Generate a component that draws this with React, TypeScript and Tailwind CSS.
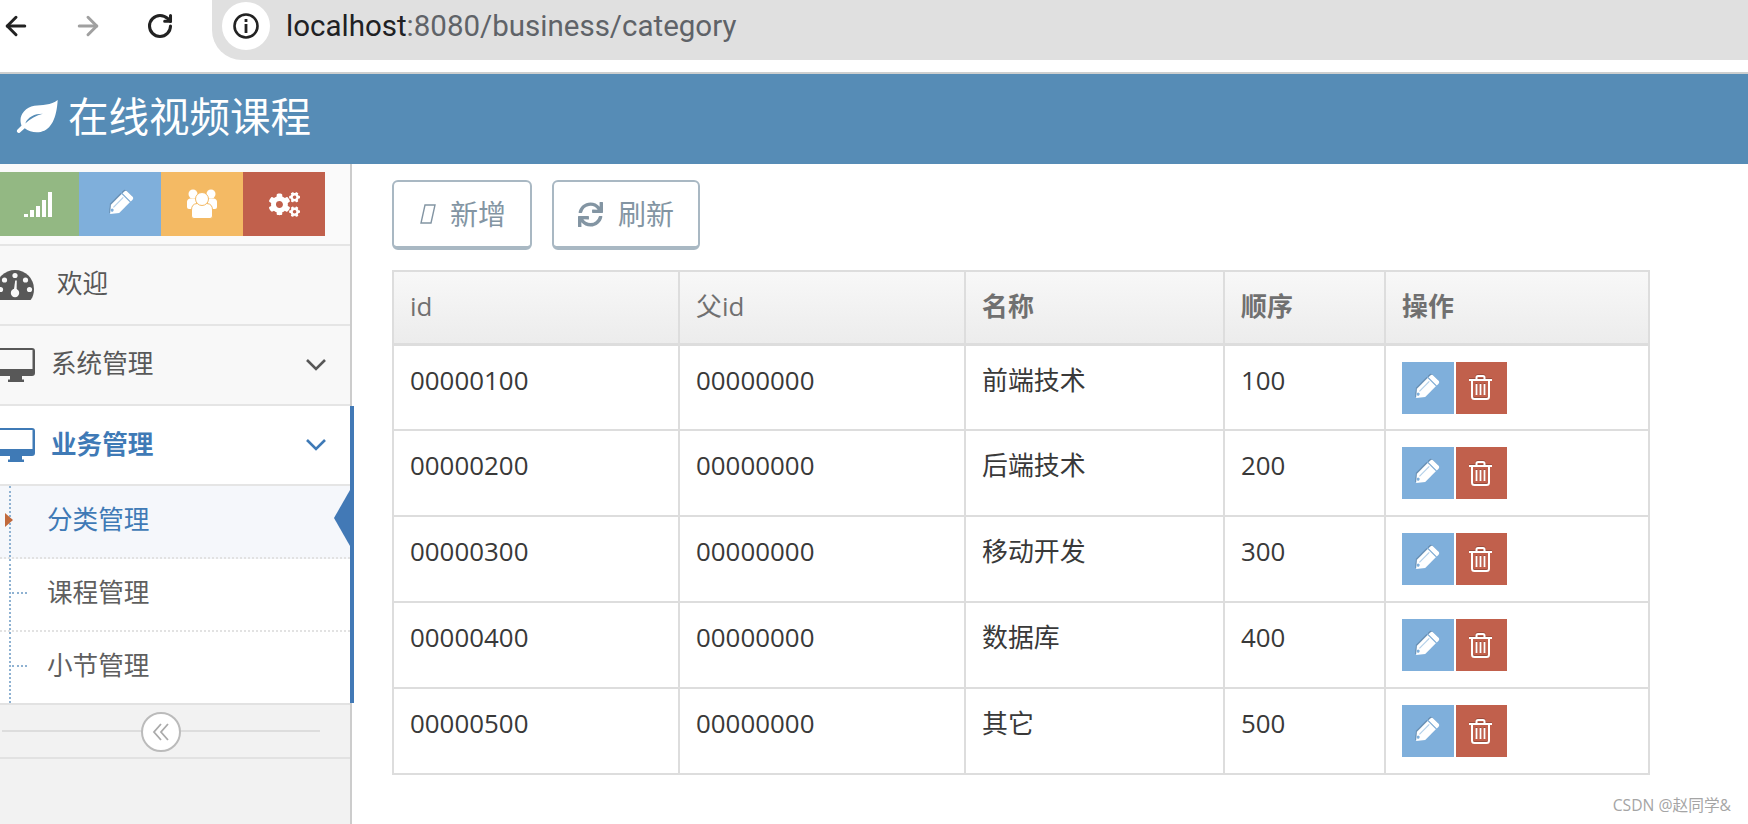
import { ArrowLeft, ArrowRight, RotateCw } from 'lucide-react'
import { FaCogs, FaSync } from 'react-icons/fa'

const rows = [
  { id: '00000100', parent: '00000000', name: '前端技术', sort: '100' },
  { id: '00000200', parent: '00000000', name: '后端技术', sort: '200' },
  { id: '00000300', parent: '00000000', name: '移动开发', sort: '300' },
  { id: '00000400', parent: '00000000', name: '数据库', sort: '400' },
  { id: '00000500', parent: '00000000', name: '其它', sort: '500' },
]

function Chevron() {
  return (
    <svg width="22" height="14" viewBox="0 0 22 14" className="ml-auto mr-[23px] shrink-0">
      <polyline points="2,2 11,11 20,2" fill="none" stroke="currentColor" strokeWidth="2.6" />
    </svg>
  )
}

function LeafIcon() {
  return (
    <svg width="43" height="34" viewBox="0 0 40 32" className="ml-[16px] -mt-[5px] shrink-0" fill="currentColor">
      <path
        fillRule="evenodd"
        d="M39 0C33 5 24 4.5 17 5.5C9 7 4 13 4 19C4 21 4.5 23 5 24L1 28C-0.5 30 2 32 3.5 30.5L8 26.5C12 30 18 31 23 30C33 28 38 17 39 0ZM8.5 22C11 16 17 13 25 13C19 14.5 13 18 8.5 22Z"
      />
    </svg>
  )
}

function PencilIcon({ bg, className }: { bg: string; className?: string }) {
  return (
    <svg width="28" height="28" viewBox="0 0 24 24" className={`shrink-0 drop-shadow-[-1px_-1px_0_rgba(0,0,0,0.18)] ${className ?? ''}`}>
      <g transform="rotate(45 12 12)" fill="#ffffff">
        <path d="M7 2Q7 0 9 0H15Q17 0 17 2V4H7Z" />
        <path d="M7 5H17V18L12 24L7 18Z" />
        <rect x="9.5" y="6" width="1" height="12" fill={bg} opacity="0.6" />
        <circle cx="11" cy="20.5" r="1.3" fill={bg} />
      </g>
    </svg>
  )
}

function TrashIcon() {
  return (
    <svg width="23" height="25" viewBox="0 0 23 25" className="-ml-[2px] drop-shadow-[0_-1px_0_rgba(0,0,0,0.2)]" fill="none" stroke="#ffffff" strokeWidth="2">
      <path d="M0 5H23" />
      <path d="M7.5 5V2.5Q7.5 1 9 1H14Q15.5 1 15.5 2.5V5" />
      <path d="M3 5V21.5Q3 24 5.5 24H17.5Q20 24 20 21.5V5" />
      <path d="M7.5 9V20M11.5 9V20M15.5 9V20" strokeWidth="1.8" />
    </svg>
  )
}

function SignalIcon() {
  return (
    <svg width="28" height="26" viewBox="0 0 28 26" fill="currentColor">
      <rect x="0" y="23" width="4" height="3" />
      <rect x="6" y="19" width="4" height="7" />
      <rect x="12" y="15" width="4" height="11" />
      <rect x="18" y="9" width="4" height="17" />
      <rect x="24" y="1" width="4" height="25" />
    </svg>
  )
}

function UsersIcon() {
  const bg = '#f4ba64'
  return (
    <svg width="30" height="30" viewBox="0 0 30 30" fill="#ffffff">
      <circle cx="6" cy="5" r="4.5" />
      <circle cx="24" cy="5" r="4.5" />
      <path d="M0 13Q0 10 3 9.5H9V20H2Q0 20 0 18Z" />
      <path d="M30 13Q30 10 27 9.5H21V20H28Q30 20 30 18Z" />
      <path d="M4.5 27V21Q4.5 15 10 14.5H20Q25.5 15 25.5 21V27Q25.5 29.5 23 29.5H7Q4.5 29.5 4.5 27Z" stroke={bg} strokeWidth="1" />
      <circle cx="15" cy="10" r="6.5" stroke={bg} strokeWidth="1" />
    </svg>
  )
}

function GaugeIcon() {
  const bg = '#f8f8f8'
  return (
    <svg width="38" height="30" viewBox="0 0 38 30" className="-ml-[4px] shrink-0" fill="currentColor">
      <path d="M19 0A19 19 0 0 0 0 19C0 23 1 26.5 3 29.5Q3.5 30 4 30H34Q34.5 30 35 29.5C37 26.5 38 23 38 19A19 19 0 0 0 19 0Z" />
      <circle cx="19" cy="5.5" r="2.6" fill={bg} />
      <circle cx="8.5" cy="10" r="2.6" fill={bg} />
      <circle cx="29.5" cy="10" r="2.6" fill={bg} />
      <circle cx="4.5" cy="19.5" r="2.6" fill={bg} />
      <circle cx="33.5" cy="19.5" r="2.6" fill={bg} />
      <circle cx="19" cy="23" r="4.2" fill={bg} />
      <path d="M17.6 22L19.2 10.5L20.8 10.5L20.6 22Z" fill={bg} />
    </svg>
  )
}

function MonitorIcon() {
  return (
    <svg width="38" height="34" viewBox="0 0 38 34" className="-ml-[3px] shrink-0" fill="currentColor">
      <path
        fillRule="evenodd"
        d="M3 0H35Q38 0 38 3V25Q38 28 35 28H3Q0 28 0 25V3Q0 0 3 0ZM2.5 2V21H35.5V2Z"
      />
      <path d="M13 28H25V31.5H27V34H11V31.5H13Z" />
    </svg>
  )
}

function BrowserBar() {
  return (
    <div className="h-[74px] shrink-0 border-b-2 border-[#cdcfcf] bg-white flex items-start">
      <div className="w-[212px] h-[52px] shrink-0 flex items-center">
        <ArrowLeft size={30} strokeWidth={2.4} className="text-[#222] ml-[1px]" />
        <ArrowRight size={30} strokeWidth={2.4} className="text-[#a0a0a0] ml-[42px]" />
        <RotateCw size={28} strokeWidth={2.6} className="text-[#222] ml-[43px]" />
      </div>
      <div className="flex-1 h-[60px] bg-[#e0e0e0] rounded-bl-[30px] flex items-center pl-[10px]">
        <div className="w-[48px] h-[48px] rounded-full bg-white flex items-center justify-center -mt-[8px]">
          <svg width="28" height="28" viewBox="0 0 28 28">
            <circle cx="14" cy="14" r="11.5" fill="none" stroke="#222" strokeWidth="2.6" />
            <rect x="12.6" y="12" width="2.8" height="9" fill="#222" />
            <rect x="12.6" y="7" width="2.8" height="3" fill="#222" />
          </svg>
        </div>
        <div className="ml-[16px] -mt-[8px] text-[29.5px] font-['Roboto',sans-serif] text-[#5f6368] whitespace-nowrap">
          <span className="text-[#202124]">localhost</span>:8080/business/category
        </div>
      </div>
    </div>
  )
}

function Sidebar() {
  return (
    <aside className="w-[352px] shrink-0 border-r-2 border-[#cccccc] bg-[#f2f2f2] flex flex-col">
      {/* shortcuts */}
      <div className="h-[82px] shrink-0 bg-[#fafafa] border-b-2 border-[#e5e5e5] pt-[8px] flex items-start -ml-[3px]">
        <div className="w-[82px] h-[64px] bg-[#93b883] flex items-center justify-center text-white">
          <SignalIcon />
        </div>
        <div className="w-[82px] h-[64px] bg-[#7fafdb] flex items-center justify-center">
          <PencilIcon bg="#7fafdb" />
        </div>
        <div className="w-[82px] h-[64px] bg-[#f4ba64] flex items-center justify-center">
          <UsersIcon />
        </div>
        <div className="w-[82px] h-[64px] bg-[#c1604c] flex items-center justify-center text-white">
          <FaCogs size={31} />
        </div>
      </div>

      {/* menu */}
      <div className="h-[80px] shrink-0 bg-[#f8f8f8] border-b-2 border-[#e5e5e5] flex items-center text-[#585858]">
        <GaugeIcon />
        <span className="ml-[23px] text-[25.6px] -mt-[2px]">欢迎</span>
      </div>
      <div className="h-[80px] shrink-0 bg-[#f8f8f8] border-b-2 border-[#e5e5e5] flex items-center text-[#585858]">
        <MonitorIcon />
        <span className="ml-[16px] text-[25.6px] -mt-[1px]">系统管理</span>
        <Chevron />
      </div>

      <div className="relative -mr-[4px] border-r-[4px] border-[#4279b6] bg-white">
        <div className="h-[80px] border-b-2 border-[#e5e5e5] flex items-center text-[#3f7ab6]">
          <MonitorIcon />
          <span className="ml-[16px] text-[25.6px] font-bold">业务管理</span>
          <Chevron />
        </div>
        <div className="h-[73px] bg-[#f5f7fb] border-b-2 border-dotted border-[#e2e2e2] flex items-center relative">
          <span className="absolute left-[9px] top-0 bottom-0 border-l-2 border-dotted border-[#8fb2d2]" />
          <span className="absolute left-[5px] top-[27px] w-0 h-0 border-y-[7px] border-y-transparent border-l-[8px] border-l-[#c1693c]" />
          <span className="absolute right-0 top-[4px] w-0 h-0 border-y-[28px] border-y-transparent border-r-[16px] border-r-[#4279b6]" />
          <span className="ml-[47px] text-[25.6px] text-[#3f7ab6] -mt-[2px]">分类管理</span>
        </div>
        <div className="h-[73px] border-b-2 border-dotted border-[#e2e2e2] flex items-center relative">
          <span className="absolute left-[9px] top-0 bottom-0 border-l-2 border-dotted border-[#8fb2d2]" />
          <span className="absolute left-[12px] top-[33px] w-[15px] border-t-2 border-dotted border-[#8fb2d2]" />
          <span className="ml-[47px] text-[25.6px] text-[#5f5f5f] -mt-[2px]">课程管理</span>
        </div>
        <div className="h-[71px] flex items-center relative">
          <span className="absolute left-[9px] top-0 bottom-0 border-l-2 border-dotted border-[#8fb2d2]" />
          <span className="absolute left-[12px] top-[33px] w-[15px] border-t-2 border-dotted border-[#8fb2d2]" />
          <span className="ml-[47px] text-[25.6px] text-[#5f5f5f] -mt-[2px]">小节管理</span>
        </div>
      </div>

      {/* collapse */}
      <div className="h-[56px] shrink-0 border-t-2 border-b-2 border-[#e2e2e2] flex items-center relative">
        <div className="ml-[2px] w-[318px] border-t-2 border-[#dddddd]" />
        <div className="absolute left-[141px] top-[7px] w-[40px] h-[40px] rounded-full bg-white border-2 border-[#bbbbbb] flex items-center justify-center">
          <svg width="18" height="18" viewBox="0 0 18 18" fill="none" stroke="#aaaaaa" strokeWidth="1.8">
            <polyline points="9,1 2,9 9,17" />
            <polyline points="16,1 9,9 16,17" />
          </svg>
        </div>
      </div>
    </aside>
  )
}

function ActionButtons() {
  return (
    <div className="flex gap-[2px]">
      <button className="w-[52px] h-[52px] bg-[#7fafdb] flex items-center justify-center">
        <PencilIcon bg="#7fafdb" className="-ml-[5px]" />
      </button>
      <button className="w-[51px] h-[52px] bg-[#c1604c] flex items-center justify-center">
        <TrashIcon />
      </button>
    </div>
  )
}

export default function App() {
  return (
    <div className="h-screen overflow-hidden flex flex-col bg-white relative font-['Open_Sans','Noto_Sans_CJK_SC',sans-serif]">
      <BrowserBar />

      <div className="h-[90px] shrink-0 bg-[#568cb6] flex items-center text-white">
        <LeafIcon />
        <span className="ml-[9px] text-[40.5px] leading-none -mt-[3px]">在线视频课程</span>
      </div>

      <div className="flex-1 flex min-h-0">
        <Sidebar />

        <main className="flex-1 pl-[40px] pt-[16px]">
          <div className="flex gap-[20px]">
            <button className="w-[140px] h-[70px] bg-white border-2 border-b-[4px] border-[#a9b8c3] rounded-[6px] flex items-center pl-[26px] text-[#8395a3]">
              <svg width="16" height="20" viewBox="0 0 16 20" className="shrink-0">
                <polygon points="5,1 15,1 11,19 1,19" fill="none" stroke="currentColor" strokeWidth="1.4" />
              </svg>
              <span className="ml-[14px] text-[28px]">新增</span>
            </button>
            <button className="w-[148px] h-[70px] bg-white border-2 border-b-[4px] border-[#a9b8c3] rounded-[6px] flex items-center pl-[24px] text-[#8395a3]">
              <FaSync size={25} className="shrink-0" />
              <span className="ml-[15px] text-[28px]">刷新</span>
            </button>
          </div>

          <table className="mt-[20px] table-fixed border-collapse w-[1258px] text-[25.9px] text-[#393939]">
            <colgroup>
              <col className="w-[286px]" />
              <col className="w-[286px]" />
              <col className="w-[259px]" />
              <col className="w-[161px]" />
              <col />
            </colgroup>
            <thead>
              <tr className="h-[73px] bg-gradient-to-b from-[#f8f8f8] to-[#ececec] text-[#707070]">
                <th className="border-2 border-b-[3px] border-[#dddddd] pl-[16px] pb-[2px] text-left font-normal">id</th>
                <th className="border-2 border-b-[3px] border-[#dddddd] pl-[16px] pb-[2px] text-left font-normal">父id</th>
                <th className="border-2 border-b-[3px] border-[#dddddd] pl-[16px] pb-[2px] text-left font-bold">名称</th>
                <th className="border-2 border-b-[3px] border-[#dddddd] pl-[16px] pb-[2px] text-left font-bold">顺序</th>
                <th className="border-2 border-b-[3px] border-[#dddddd] pl-[16px] pb-[2px] text-left font-bold">操作</th>
              </tr>
            </thead>
            <tbody>
              {rows.map(r => (
                <tr key={r.id} className="h-[86px]">
                  <td className="border-2 border-[#dddddd] pl-[16px] pt-[15px] align-top">{r.id}</td>
                  <td className="border-2 border-[#dddddd] pl-[16px] pt-[15px] align-top">{r.parent}</td>
                  <td className="border-2 border-[#dddddd] pl-[16px] pt-[15px] align-top">{r.name}</td>
                  <td className="border-2 border-[#dddddd] pl-[16px] pt-[15px] align-top">{r.sort}</td>
                  <td className="border-2 border-[#dddddd] pl-[16px] pt-[16px] align-top">
                    <ActionButtons />
                  </td>
                </tr>
              ))}
            </tbody>
          </table>
        </main>
      </div>

      <span className="absolute right-[17px] bottom-[6px] text-[15.7px] text-[#a5a5a5]">CSDN @赵同学&amp;</span>
    </div>
  )
}
